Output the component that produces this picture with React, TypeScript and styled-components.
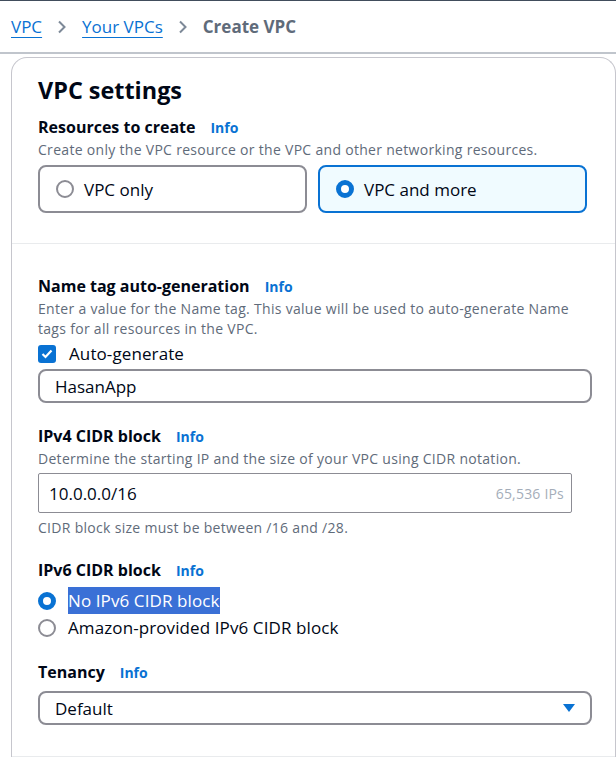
import React from 'react'
import styled, { createGlobalStyle, css } from 'styled-components'

const GlobalStyle = createGlobalStyle`
	html, body {
		margin: 0;
		padding: 0;
		background: #ffffff;
	}
	body {
		font-family: "Open Sans", Roboto, Arial, sans-serif;
		color: #000716;
		overflow: hidden;
	}
`

const blue = '#0972d3'
const grey = '#5f6b7a'

const Page = styled.div`
	border-top: 1px solid #414d5c;
	width: 616px;
	height: 759px;
	overflow: hidden;
`

const Breadcrumbs = styled.nav`
	display: flex;
	align-items: center;
	gap: 15px;
	height: 51px;
	padding-left: 11px;
	border-bottom: 2px solid #c0c5cc;
	font-size: 17px;
`

const Crumb = styled.a`
	color: ${blue};
	text-decoration: underline;
	text-underline-offset: 4px;
	text-decoration-thickness: 1px;
`

const Current = styled.span`
	color: ${grey};
	font-weight: 700;
`

const Chevron = () => (
	<svg width="10" height="14" viewBox="0 0 10 14">
		<path d="M2 1.5 L7.5 7 L2 12.5" fill="none" stroke="#7d8998" strokeWidth="2" />
	</svg>
)

const Card = styled.section`
	margin: 3px 0 0 11px;
	border: 1px solid #c6c6cd;
	border-bottom: none;
	border-radius: 16px 16px 0 0;
`

const CardHeader = styled.div`
	padding: 17px 0 0 26px;
`

const Heading = styled.h2`
	margin: 0 0 11px;
	font-size: 23.4px;
	font-weight: 700;
	line-height: 30px;
`

const Section = styled.div<{ $divided?: boolean }>`
	padding: 0 26px 0 26px;
	${({ $divided }) =>
		$divided &&
		css`
			border-top: 1px solid #e9ebed;
		`}
`

const Field = styled.div<{ $top?: number }>`
	padding-top: ${({ $top }) => $top ?? 0}px;
`

const Label = styled.div`
	display: flex;
	align-items: baseline;
	gap: 15px;
	font-size: 16px;
	font-weight: 700;
	line-height: 22px;
`

const Info = styled.a`
	color: ${blue};
	font-size: 14px;
	font-weight: 700;
`

const Desc = styled.div`
	color: ${grey};
	font-size: 14px;
	line-height: 20px;
	letter-spacing: 0.3px;
	margin-top: 1px;
`

const Tiles = styled.div`
	display: grid;
	grid-template-columns: 269px 269px;
	gap: 11px;
	margin-top: 5px;
`

const Tile = styled.div<{ $selected?: boolean }>`
	display: flex;
	align-items: center;
	gap: 10px;
	height: 44px;
	padding: 0 16px;
	border: 2px solid ${({ $selected }) => ($selected ? blue : '#8c8c94')};
	background: ${({ $selected }) => ($selected ? '#f0fbff' : '#ffffff')};
	border-radius: 8px;
	font-size: 17px;
`

const RadioDot = styled.span<{ $checked?: boolean }>`
	flex: none;
	box-sizing: border-box;
	width: 18px;
	height: 18px;
	border-radius: 50%;
	${({ $checked }) =>
		$checked
			? css`
					border: 5px solid ${blue};
					background: #fff;
			  `
			: css`
					border: 2px solid #8c8c94;
			  `}
`

const Option = styled.div`
	display: flex;
	align-items: center;
	gap: 12px;
	font-size: 17px;
	line-height: 27px;
	letter-spacing: 0.1px;
`

const Selected = styled.span`
	background: #3a70d6;
	color: #ffffff;
`

const Checkbox = styled.span`
	display: inline-flex;
	align-items: center;
	justify-content: center;
	width: 18px;
	height: 18px;
	border-radius: 3px;
	background: ${blue};
`

const TextBox = styled.div<{ $rounded?: boolean; $width?: number }>`
	display: flex;
	align-items: center;
	justify-content: space-between;
	box-sizing: border-box;
	width: ${({ $width }) => $width ?? 554}px;
	font-size: 17px;
	${({ $rounded }) =>
		$rounded
			? css`
					height: 34px;
					border: 2px solid #8c8c94;
					border-radius: 8px;
					padding: 0 14px 0 15px;
			  `
			: css`
					height: 40px;
					border: 1px solid #8c8c94;
					border-radius: 2px;
					padding: 0 7px 0 10px;
			  `}
`

const Hint = styled.span`
	color: #a4adb9;
	font-size: 14px;
	letter-spacing: 0.2px;
`

const Caret = () => (
	<svg width="14" height="10" viewBox="0 0 14 10">
		<path d="M1 1 H13 L7 9 Z" fill={blue} />
	</svg>
)

const BottomRule = styled.div`
	border-top: 1px solid #e9ebed;
	margin-top: 31px;
`

export default function App() {
	return (
		<>
			<GlobalStyle />
			<Page>
				<Breadcrumbs>
					<Crumb>VPC</Crumb>
					<Chevron />
					<Crumb>Your VPCs</Crumb>
					<Chevron />
					<Current>Create VPC</Current>
				</Breadcrumbs>
				<Card>
					<CardHeader>
						<Heading>VPC settings</Heading>
					</CardHeader>
					<Section>
						<Label>
							Resources to create <Info>Info</Info>
						</Label>
						<Desc>Create only the VPC resource or the VPC and other networking resources.</Desc>
						<Tiles>
							<Tile>
								<RadioDot />
								VPC only
							</Tile>
							<Tile $selected>
								<RadioDot $checked />
								VPC and more
							</Tile>
						</Tiles>
					</Section>
					<Section $divided style={{ marginTop: 30 }}>
						<Field $top={31}>
							<Label>
								Name tag auto-generation <Info>Info</Info>
							</Label>
							<Desc>
								Enter a value for the Name tag. This value will be used to auto-generate Name
								tags for all resources in the VPC.
							</Desc>
							<Option style={{ gap: 13, marginTop: 1 }}>
								<Checkbox>
									<svg width="12" height="10" viewBox="0 0 12 10">
										<path d="M1.5 5 L4.5 8 L10.5 1.5" fill="none" stroke="#fff" strokeWidth="2.2" />
									</svg>
								</Checkbox>
								Auto-generate
							</Option>
							<TextBox $rounded style={{ marginTop: 2 }}>
								HasanApp
							</TextBox>
						</Field>
						<Field $top={22}>
							<Label>
								IPv4 CIDR block <Info>Info</Info>
							</Label>
							<Desc>Determine the starting IP and the size of your VPC using CIDR notation.</Desc>
							<TextBox $width={534} style={{ marginTop: 4 }}>
								10.0.0.0/16
								<Hint>65,536 IPs</Hint>
							</TextBox>
							<Desc style={{ marginTop: 5 }}>CIDR block size must be between /16 and /28.</Desc>
						</Field>
						<Field $top={21}>
							<Label>
								IPv6 CIDR block <Info>Info</Info>
							</Label>
							<Option style={{ marginTop: 5 }}>
								<RadioDot $checked />
								<Selected>No IPv6 CIDR block</Selected>
							</Option>
							<Option>
								<RadioDot />
								Amazon-provided IPv6 CIDR block
							</Option>
						</Field>
						<Field $top={20}>
							<Label>
								Tenancy <Info>Info</Info>
							</Label>
							<TextBox $rounded style={{ marginTop: 7 }}>
								Default
								<Caret />
							</TextBox>
						</Field>
					</Section>
					<BottomRule />
				</Card>
			</Page>
		</>
	)
}
